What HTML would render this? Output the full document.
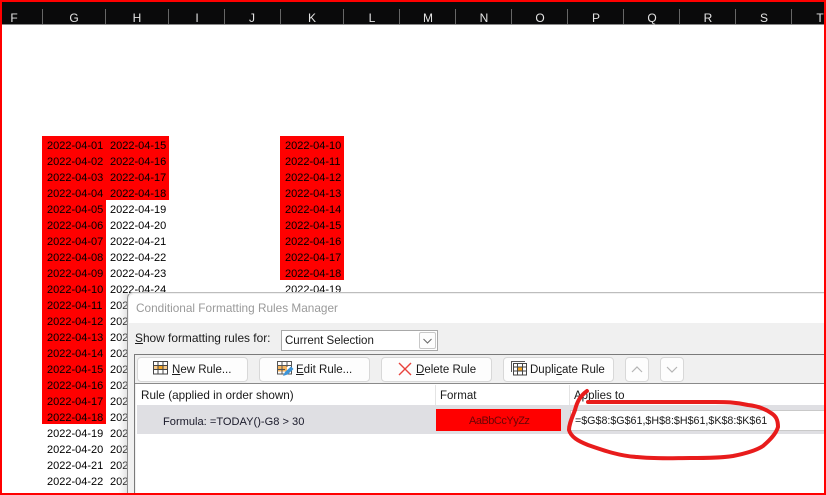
<!DOCTYPE html>
<html><head><meta charset="utf-8">
<style>
html,body{margin:0;padding:0;background:#fff}
#p{position:relative;width:826px;height:495px;overflow:hidden;background:#fff;font-family:"Liberation Sans",sans-serif;color:#111}
#p div,#p span.a{position:absolute}
.hl{top:2px;height:22px;left:2px;width:822px;background:#0a0a0b}
.sep{top:9px;height:15px;width:1px;background:#666}
.c{top:11px;width:20px;text-align:center;font-size:12px;line-height:14px;color:#e4e4e4}
.col{font-size:11px;line-height:16px;white-space:nowrap;color:#000}
.btn{top:357px;height:23px;width:109px;background:#fdfdfd;border:1px solid #d8d8d8;border-radius:4px;box-sizing:content-box}
.t{font-size:11.5px;line-height:14px;white-space:nowrap;color:#1a1a1a}
u{text-underline-offset:1px}
</style></head><body>
<div id="p">
<div class="hl"></div>
<div style="left:2px;top:24px;width:822px;height:1px;background:#8a8a8a"></div>
<div class="sep" style="left:42px"></div><div class="sep" style="left:105px"></div><div class="sep" style="left:168px"></div><div class="sep" style="left:224px"></div><div class="sep" style="left:280px"></div><div class="sep" style="left:343px"></div><div class="sep" style="left:399px"></div><div class="sep" style="left:455px"></div><div class="sep" style="left:511px"></div><div class="sep" style="left:567px"></div><div class="sep" style="left:623px"></div><div class="sep" style="left:679px"></div><div class="sep" style="left:735px"></div><div class="sep" style="left:791px"></div>
<div class="c" style="left:4px">F</div><div class="c" style="left:64px">G</div><div class="c" style="left:127px">H</div><div class="c" style="left:187px">I</div><div class="c" style="left:242px">J</div><div class="c" style="left:302px">K</div><div class="c" style="left:362px">L</div><div class="c" style="left:418px">M</div><div class="c" style="left:474px">N</div><div class="c" style="left:530px">O</div><div class="c" style="left:586px">P</div><div class="c" style="left:642px">Q</div><div class="c" style="left:698px">R</div><div class="c" style="left:754px">S</div><div class="c" style="left:810px">T</div>

<div style="left:42px;top:136px;width:64px;height:288px;background:#f00"></div>
<div style="left:106px;top:136px;width:63px;height:64px;background:#f00"></div>
<div style="left:280px;top:136px;width:64px;height:144px;background:#f00"></div>

<div class="col" style="left:47px;top:138px">2022-04-01<br>2022-04-02<br>2022-04-03<br>2022-04-04<br>2022-04-05<br>2022-04-06<br>2022-04-07<br>2022-04-08<br>2022-04-09<br>2022-04-10<br>2022-04-11<br>2022-04-12<br>2022-04-13<br>2022-04-14<br>2022-04-15<br>2022-04-16<br>2022-04-17<br>2022-04-18<br>2022-04-19<br>2022-04-20<br>2022-04-21<br>2022-04-22</div>
<div class="col" style="left:110px;top:138px">2022-04-15<br>2022-04-16<br>2022-04-17<br>2022-04-18<br>2022-04-19<br>2022-04-20<br>2022-04-21<br>2022-04-22<br>2022-04-23<br>2022-04-24<br>2022-04-25<br>2022-04-26<br>2022-04-27<br>2022-04-28<br>2022-04-29<br>2022-04-30<br>2022-05-01<br>2022-05-02<br>2022-05-03<br>2022-05-04<br>2022-05-05<br>2022-05-06</div>
<div class="col" style="left:285px;top:138px">2022-04-10<br>2022-04-11<br>2022-04-12<br>2022-04-13<br>2022-04-14<br>2022-04-15<br>2022-04-16<br>2022-04-17<br>2022-04-18<br>2022-04-19</div>

<!-- dialog -->
<div style="left:118px;top:293px;width:10px;height:202px;background:linear-gradient(to right,rgba(190,190,190,0),rgba(190,190,190,.45))"></div>
<div style="left:127px;top:292px;width:699px;height:203px;background:#f0f0f0;border-top:1px solid #bdbdbd;border-left:1px solid #8f8f8f;border-top-left-radius:6px;box-sizing:border-box"></div>
<div style="left:129px;top:294px;width:697px;height:29px;background:#fff;border-top-left-radius:6px"></div>
<div class="t" style="left:136px;top:301px;font-size:11.8px;color:#9a9a9a">Conditional Formatting Rules Manager</div>
<div class="t" style="left:135px;top:331px;font-size:11.9px"><u>S</u>how formatting rules for:</div>
<div style="left:281px;top:330px;width:157px;height:21px;background:#fff;border:1px solid #a8a8a8;box-sizing:border-box"></div>
<div class="t" style="left:285px;top:334px;font-size:11.5px">Current Selection</div>
<div style="left:419px;top:332px;width:17px;height:17px;background:#fdfdfd;border:1px solid #c8c8c8;box-sizing:border-box;border-radius:2px"></div>
<svg style="position:absolute;left:419px;top:332px" width="17" height="17"><path d="M4.500 7 L8.500 11 L12.500 7" fill="none" stroke="#666" stroke-width="1"/></svg>

<!-- panel -->
<div style="left:134px;top:354px;width:692px;height:141px;border-top:1px solid #7a7a7a;border-left:1px solid #7a7a7a;box-sizing:border-box"></div>
<div style="left:135px;top:383px;width:691px;height:1px;background:#8a8a8a"></div>
<div style="left:136px;top:384px;width:690px;height:111px;background:#fff"></div>

<div class="btn" style="left:137px"></div>
<div class="btn" style="left:259px"></div>
<div class="btn" style="left:381px"></div>
<div class="btn" style="left:503px"></div>
<div class="btn" style="left:625px;width:22px"></div>
<div class="btn" style="left:660px;width:22px"></div>

<svg style="position:absolute;left:153px;top:361px" width="16" height="15"><rect x=".5" y=".5" width="14" height="12.500" fill="#fff" stroke="#444"/><rect x="1" y="4.500" width="13" height="4" fill="#f9c987"/><rect x="5" y="4.500" width="5" height="4" fill="#f5a623"/><path d="M.5 4.500H14.500M.5 8.500H14.500M5 .5V13M10 .5V13" stroke="#444" fill="none"/></svg>
<div class="t" style="left:172px;top:363px"><u>N</u>ew Rule...</div>

<svg style="position:absolute;left:277px;top:361px" width="18" height="17"><rect x=".5" y=".5" width="14" height="12.500" fill="#fff" stroke="#555"/><rect x="1" y="4.500" width="9" height="6" fill="#f7b660"/><path d="M.5 4.500H14.500M.5 8.500H8M5 .5V13M10 .5V6" stroke="#555" fill="none"/><path d="M6 15 L8 11 L14 5.500 L16.500 8 L10.500 13.500 Z" fill="#3d94d8"/></svg>
<div class="t" style="left:296px;top:363px"><u>E</u>dit Rule...</div>

<svg style="position:absolute;left:398px;top:362px" width="14" height="14"><path d="M1 1 L13 13 M13 1 L1 13" stroke="#e8423c" stroke-width="1.400" fill="none"/></svg>
<div class="t" style="left:416px;top:363px"><u>D</u>elete Rule</div>

<svg style="position:absolute;left:511px;top:361px" width="17" height="15"><path d="M.5 11V.5H14" fill="none" stroke="#555"/><rect x="2.500" y="2.500" width="13" height="11.500" fill="#fff" stroke="#444"/><rect x="6.500" y="6" width="5" height="4" fill="#f5a623"/><path d="M2.500 6H15.500M2.500 10H15.500M6.500 2.500V14M11.500 2.500V14" stroke="#444" fill="none"/></svg>
<div class="t" style="left:530px;top:363px">Dupli<u>c</u>ate Rule</div>

<svg style="position:absolute;left:625px;top:357px" width="24" height="25"><path d="M7 15 L12 10 L17 15" fill="none" stroke="#b5b5b5" stroke-width="1.200"/></svg>
<svg style="position:absolute;left:660px;top:357px" width="24" height="25"><path d="M7 10 L12 15 L17 10" fill="none" stroke="#b5b5b5" stroke-width="1.200"/></svg>

<!-- list -->
<div class="t" style="left:141px;top:389px;font-size:11.7px">Rule (applied in order shown)</div>
<div class="t" style="left:440px;top:389px">Format</div>
<div class="t" style="left:574px;top:389px">Applies to</div>
<div style="left:435px;top:385px;width:1px;height:20px;background:#e4e4e4"></div>
<div style="left:569px;top:385px;width:1px;height:20px;background:#e4e4e4"></div>
<div style="left:137px;top:405px;width:689px;height:29px;background:#dfdfe3"></div>
<div class="t" style="left:163px;top:415px;color:#1a1a2a;font-size:11.1px">Formula: =TODAY()-G8 &gt; 30</div>
<div style="left:436px;top:409px;width:125px;height:22px;background:#f00"></div>
<div class="t" style="left:469px;top:414px;color:#6a0505;font-size:11px;letter-spacing:-.5px">AaBbCcYyZz</div>
<div style="left:570px;top:410px;width:256px;height:21px;background:#fff;border:1px solid #c9c9c9;box-sizing:border-box"></div>
<div class="t" style="left:575px;top:414px;font-size:10.7px">=$G$8:$G$61,$H$8:$H$61,$K$8:$K$61</div>

<svg style="position:absolute;left:0;top:0" width="826" height="495"><path d="M587 391 C580 396 577 402 575 410 C572 418 569 424 569 430 C571 437 578 441 588 445 C605 451 620 456 637 457 C655 459 675 458 690 458 C705 458 720 458 733 456 C748 453 757 450 763 446 C770 440 776 434 778 427 C778 420 776 416 771 413 C764 408 757 406 748 405 C735 402 725 402 715 402 C690 402 660 402 630 402 C612 402 600 402 588 402" fill="none" stroke="#e81c1c" stroke-width="4" stroke-linecap="round" stroke-linejoin="round"/></svg>

<!-- red frame -->
<div style="left:0;top:0;width:826px;height:2px;background:#f00"></div>
<div style="left:0;top:493px;width:826px;height:2px;background:#f00"></div>
<div style="left:0;top:0;width:2px;height:495px;background:#f00"></div>
<div style="left:824px;top:0;width:2px;height:495px;background:#f00"></div>
</div>
</body></html>
